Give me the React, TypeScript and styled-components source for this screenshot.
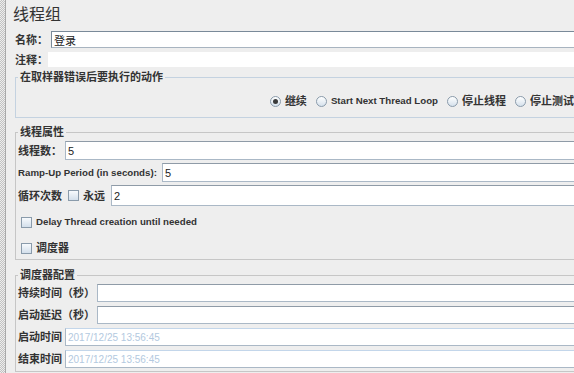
import * as React from 'react';
import styled, { createGlobalStyle } from 'styled-components';

const fontStack = `"Liberation Sans", "Noto Sans CJK SC", sans-serif`;

const GlobalStyle = createGlobalStyle`
    html, body {
        margin: 0;
        padding: 0;
        background: #eeeeee;
        overflow: hidden;
        font-family: ${fontStack};
        color: #333333;
    }
`;

const Frame = styled.div`
    display: flex;
    width: 100vw;
    height: 100vh;
    overflow: hidden;
`;

const Grip = styled.div`
    flex: 0 0 5px;
    background: repeating-conic-gradient(#c2c2c2 0 25%, #ededed 0 50%) 0 0 / 2px 2px;
    border-right: 1px solid #a9a9a9;
`;

const Panel = styled.div`
    flex: 0 0 600px;
    display: flex;
    flex-direction: column;
    padding: 3px 0 0 7px;
    box-sizing: border-box;
`;

const Title = styled.div`
    height: 24px;
    line-height: 24px;
    font-size: 16px;
    margin-bottom: 4px;
`;

const Row = styled.div<{ $height: number; $gap?: number; $top?: number; $indent?: number }>`
    display: flex;
    align-items: center;
    height: ${({ $height }) => $height}px;
    gap: ${({ $gap }) => $gap ?? 3}px;
    margin-top: ${({ $top }) => $top ?? 0}px;
    padding-left: ${({ $indent }) => $indent ?? 0}px;
`;

const Label = styled.span<{ $latin?: boolean }>`
    flex-shrink: 0;
    font-weight: bold;
    font-size: ${({ $latin }) => ($latin ? '9.7px' : '11px')};
    line-height: 14px;
    white-space: nowrap;
`;

const TextField = styled.input<{ $muted?: boolean; $plain?: boolean }>`
    flex: 1;
    min-width: 0;
    height: 100%;
    box-sizing: border-box;
    margin: 0;
    padding: 0 2px;
    font-family: ${fontStack};
    font-size: ${({ $muted }) => ($muted ? '10px' : '11px')};
    color: ${({ $muted }) => ($muted ? '#b3c9e0' : '#222222')};
    background: #ffffff;
    border: ${({ $plain }) => ($plain ? 'none' : '1px solid #aab8c6')};
    border-top-color: ${({ $plain, $muted }) => ($plain ? 'transparent' : $muted ? '#c3d6ea' : '#8f9ba7')};
    outline: none;
`;

const NameField = styled(TextField)`
    border-color: #7a8a99;
    border-bottom-color: #a8b4c0;
    border-right-color: #a8b4c0;
`;

const Group = styled.fieldset<{ $top: number; $line: string; $bottom: number }>`
    margin: ${({ $top }) => $top}px 0 0 2px;
    padding: 0 0 ${({ $bottom }) => $bottom}px 2px;
    border: 1px solid ${({ $line }) => $line};
    border-right: none;
    min-width: 0;
`;

const Legend = styled.legend`
    padding: 0 2px;
    font-weight: bold;
    font-size: 11px;
    line-height: 14px;
    white-space: nowrap;
`;

const RadioRow = styled.div`
    display: flex;
    justify-content: flex-end;
    align-items: center;
    gap: 9px;
    height: 14px;
    margin-top: 10px;
    padding-right: 32px;
    margin-bottom: 9px;
`;

const Option = styled.label`
    display: inline-flex;
    align-items: center;
    gap: 4px;
`;

const RadioDot = styled.span<{ $on?: boolean }>`
    position: relative;
    width: 9px;
    height: 9px;
    border-radius: 50%;
    border: 1px solid #8a9bab;
    background: linear-gradient(#ffffff, #d5e1ec);

    &::after {
        content: '';
        display: ${({ $on }) => ($on ? 'block' : 'none')};
        position: absolute;
        left: 2px;
        top: 2px;
        width: 5px;
        height: 5px;
        border-radius: 50%;
        background: #3a3a3a;
    }
`;

const Box = styled.span`
    flex-shrink: 0;
    width: 9px;
    height: 9px;
    border: 1px solid #8a9bab;
    background: linear-gradient(#f7fafd, #d3dfeb);
`;

const Radio = ({ label, on, latin }: { label: string; on?: boolean; latin?: boolean }) => (
    <Option>
        <RadioDot $on={on} />
        <Label $latin={latin}>{label}</Label>
    </Option>
);

const Check = ({ label, latin }: { label: string; latin?: boolean }) => (
    <Option>
        <Box />
        <Label $latin={latin}>{label}</Label>
    </Option>
);

const App = () => {
    return (
        <>
            <GlobalStyle />
            <Frame>
                <Grip />
                <Panel>
                    <Title>线程组</Title>
                    <Row $height={17} $indent={2}>
                        <Label>名称：</Label>
                        <NameField readOnly value="登录" />
                    </Row>
                    <Row $height={15} $indent={2} $top={4} $gap={0}>
                        <Label>注释：</Label>
                        <TextField $plain readOnly value="" />
                    </Row>

                    <Group $top={3} $line="#c4d2e0" $bottom={0}>
                        <Legend>在取样器错误后要执行的动作</Legend>
                        <RadioRow>
                            <Radio label="继续" on />
                            <Radio label="Start Next Thread Loop" latin />
                            <Radio label="停止线程" />
                            <Radio label="停止测试" />
                        </RadioRow>
                    </Group>

                    <Group $top={7} $line="#c6c6c6" $bottom={0}>
                        <Legend>线程属性</Legend>
                        <Row $height={19} $top={2}>
                            <Label>线程数：</Label>
                            <TextField readOnly value="5" />
                        </Row>
                        <Row $height={19} $top={3} $gap={5}>
                            <Label $latin>Ramp-Up Period (in seconds):</Label>
                            <TextField readOnly value="5" />
                        </Row>
                        <Row $height={21} $top={3} $gap={6}>
                            <Label>循环次数</Label>
                            <Check label="永远" />
                            <TextField readOnly value="2" />
                        </Row>
                        <Row $height={22} $top={5} $indent={3}>
                            <Check label="Delay Thread creation until needed" latin />
                        </Row>
                        <Row $height={22} $top={4} $indent={3}>
                            <Check label="调度器" />
                        </Row>
                    </Group>

                    <Group $top={8} $line="#c6c6c6" $bottom={3}>
                        <Legend>调度器配置</Legend>
                        <Row $height={18} $top={2} $gap={2}>
                            <Label>持续时间（秒）</Label>
                            <TextField readOnly value="" />
                        </Row>
                        <Row $height={18} $top={4} $gap={2}>
                            <Label>启动延迟（秒）</Label>
                            <TextField readOnly value="" />
                        </Row>
                        <Row $height={18} $top={4}>
                            <Label>启动时间</Label>
                            <TextField $muted readOnly value="2017/12/25 13:56:45" />
                        </Row>
                        <Row $height={18} $top={4}>
                            <Label>结束时间</Label>
                            <TextField $muted readOnly value="2017/12/25 13:56:45" />
                        </Row>
                    </Group>
                </Panel>
            </Frame>
        </>
    );
};

export default App;
